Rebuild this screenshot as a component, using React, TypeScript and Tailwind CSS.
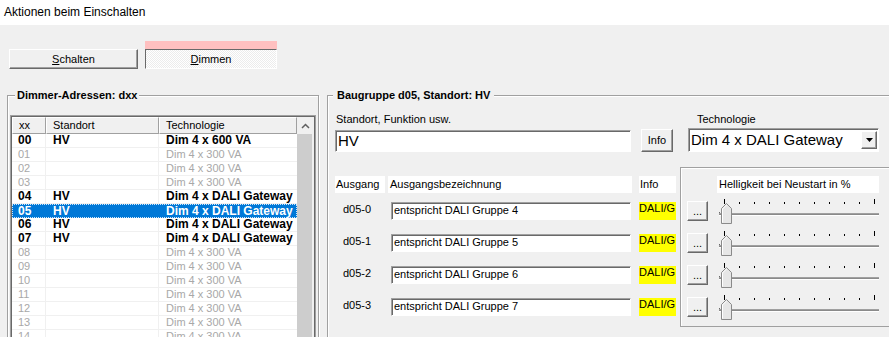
const FONT = "font-['Liberation_Sans',Arial,sans-serif]";

type Row = { xx: string; st: string; tech: string; on: boolean };

const rows: Row[] = [
  { xx: '00', st: 'HV', tech: 'Dim 4 x 600 VA', on: true },
  { xx: '01', st: '', tech: 'Dim 4 x 300 VA', on: false },
  { xx: '02', st: '', tech: 'Dim 4 x 300 VA', on: false },
  { xx: '03', st: '', tech: 'Dim 4 x 300 VA', on: false },
  { xx: '04', st: 'HV', tech: 'Dim 4 x DALI Gateway', on: true },
  { xx: '05', st: 'HV', tech: 'Dim 4 x DALI Gateway', on: true },
  { xx: '06', st: 'HV', tech: 'Dim 4 x DALI Gateway', on: true },
  { xx: '07', st: 'HV', tech: 'Dim 4 x DALI Gateway', on: true },
  { xx: '08', st: '', tech: 'Dim 4 x 300 VA', on: false },
  { xx: '09', st: '', tech: 'Dim 4 x 300 VA', on: false },
  { xx: '10', st: '', tech: 'Dim 4 x 300 VA', on: false },
  { xx: '11', st: '', tech: 'Dim 4 x 300 VA', on: false },
  { xx: '12', st: '', tech: 'Dim 4 x 300 VA', on: false },
  { xx: '13', st: '', tech: 'Dim 4 x 300 VA', on: false },
  { xx: '14', st: '', tech: 'Dim 4 x 300 VA', on: false },
];

const outputs = ['0', '1', '2', '3'];

const raised =
  'border border-t-white border-l-white border-r-[#696969] border-b-[#696969] shadow-[inset_-1px_-1px_0_#a0a0a0] bg-[#f0f0f0]';
const sunken =
  'border border-t-[#a0a0a0] border-l-[#a0a0a0] border-r-white border-b-white shadow-[inset_1px_1px_0_#696969] bg-white';

const ListRow = ({ r, sel }: { r: Row; sel: boolean }) => {
  const text = r.on ? 'text-[12px] font-bold text-black' : 'text-[11px] text-[#a8a8a8]';
  if (sel) {
    return (
      <div className="flex h-[14px] bg-[#0078d7] text-white outline outline-1 outline-dotted outline-[#cfe6fb] -outline-offset-1">
        <div className="w-[34px] pl-[6px] text-[12px] font-bold leading-[14px]">{r.xx}</div>
        <div className="w-[113px] pl-[7px] text-[12px] font-bold leading-[14px]">{r.st}</div>
        <div className="w-[138px] pl-[7px] text-[12px] font-bold leading-[14px] whitespace-nowrap overflow-hidden">{r.tech}</div>
      </div>
    );
  }
  return (
    <div className={`flex h-[14px] ${text}`}>
      <div className="w-[34px] pl-[6px] leading-[13px] border-r border-b border-[#f0f0f0]">{r.xx}</div>
      <div className="w-[113px] pl-[7px] leading-[13px] border-r border-b border-[#f0f0f0]">{r.st}</div>
      <div className="w-[138px] pl-[7px] leading-[13px] border-b border-[#f0f0f0] whitespace-nowrap overflow-hidden">{r.tech}</div>
    </div>
  );
};

const Slider = () => {
  const ticks = Array.from({ length: 11 }, (_, i) => 6 + i * 15);
  return (
    <svg width="163" height="28" className="block -mt-[4px] ml-[10px]">
      {ticks.map((x, i) => {
        const tall = i === 0 || i === 10;
        return <rect key={i} x={x} y={tall ? 2 : 5} width="1" height={tall ? 5 : 2} fill="#000" />;
      })}
      <rect x="1" y="16" width="160" height="1" fill="#a0a0a0" />
      <rect x="1" y="17" width="160" height="1" fill="#8a8a8a" />
      <rect x="1" y="18" width="160" height="1" fill="#fff" />
      <rect x="1" y="15" width="1" height="1" fill="#696969" />
      <polygon points="3.5,11.5 8.5,6.5 13.5,11.5 13.5,26.5 3.5,26.5" fill="#e6e6e6" stroke="#8a8a8a" />
      <polyline points="4.5,25.5 4.5,12 8.5,8" fill="none" stroke="#fff" />
    </svg>
  );
};

export default function App() {
  return (
    <div className={`w-[889px] h-[337px] overflow-hidden bg-[#f0f0f0] text-black ${FONT}`}>
      <div className="h-[25px] bg-white pl-[4px] text-[12px] leading-[25px]">Aktionen beim Einschalten</div>

      {/* tabs */}
      <div className="flex items-end pt-[16px] pl-[9px]">
        <button className={`w-[129px] h-[20px] text-[11px] ${raised}`}>
          <span className="underline">S</span>chalten
        </button>
        <div className="ml-[7px] flex flex-col">
          <div className="h-[8px] w-[132px] bg-[#ffc0c0]" />
          <button className="w-[132px] h-[20px] text-[11px] border border-t-[#696969] border-l-[#696969] border-r-white border-b-white bg-[repeating-conic-gradient(#ffffff_0_25%,#ececec_0_50%)] bg-[length:2px_2px]">
            <span className="underline">D</span>immen
          </button>
        </div>
      </div>

      <div className="flex mt-[20px] pl-[7px] gap-[8px]">
        {/* left group */}
        <fieldset className="w-[312px] h-[260px] shrink-0 border border-[#a0a0a0] shadow-[inset_1px_1px_0_#fff,1px_1px_0_#fff]">
          <legend className="ml-[7px] px-[2px] bg-[#f0f0f0] text-[11px] font-bold leading-[13px]">Dimmer-Adressen: dxx</legend>
          <div className="px-[2px] pt-[13px]">
            <div className="w-[306px] h-[240px] border border-[#a0a0a0]">
              <div className="flex h-full border border-[#696969] bg-white">
                <div className="w-[285px]">
                  <div className="flex h-[17px] text-[11px] leading-[15px] bg-[#f0f0f0]">
                    <div className="w-[34px] pl-[6px] border border-t-white border-l-white border-r-[#a0a0a0] border-b-[#a0a0a0]">xx</div>
                    <div className="w-[113px] pl-[6px] border border-t-white border-l-white border-r-[#a0a0a0] border-b-[#a0a0a0]">Standort</div>
                    <div className="w-[138px] pl-[6px] border border-t-white border-l-white border-r-[#a0a0a0] border-b-[#a0a0a0]">Technologie</div>
                  </div>
                  {rows.map((r) => (
                    <ListRow key={r.xx} r={r} sel={r.xx === '05'} />
                  ))}
                </div>
                <div className="w-[17px] flex flex-col bg-[#f0f0f0]">
                  <div className="h-[17px] flex items-center justify-center">
                    <svg width="9" height="6">
                      <polyline points="1,5 4.5,1.5 8,5" fill="none" stroke="#606060" strokeWidth="1.5" />
                    </svg>
                  </div>
                  <div className="flex-1 mr-[2px] bg-[#cdcdcd]" />
                </div>
              </div>
            </div>
          </div>
        </fieldset>

        {/* right group */}
        <fieldset className="w-[575px] h-[260px] shrink-0 border border-[#a0a0a0] shadow-[inset_1px_1px_0_#fff,1px_1px_0_#fff]">
          <legend className="ml-[5px] px-[4px] bg-[#f0f0f0] text-[11px] font-bold leading-[13px]">Baugruppe d05, Standort: HV</legend>
          <div className="pl-[7px] pt-[11px]">
            <div className="flex items-end">
              <div className="w-[296px] flex flex-col">
                <div className="pl-[1px] text-[11px] leading-[13px]">Standort, Funktion usw.</div>
                <div className={`mt-[4px] h-[22px] pl-[2px] text-[15px] leading-[19px] ${sunken}`}>HV</div>
              </div>
              <button className={`ml-[10px] w-[32px] h-[23px] text-[11px] ${raised}`}>Info</button>
              <div className="ml-[15px] w-[191px] flex flex-col">
                <div className="pl-[9px] text-[11px] leading-[13px]">Technologie</div>
                <div className={`mt-[2px] h-[24px] flex items-center justify-between pl-[2px] pr-[1px] ${sunken}`}>
                  <span className="text-[15px] leading-[18px]">Dim 4 x DALI Gateway</span>
                  <div className={`w-[16px] h-[18px] flex items-center justify-center ${raised}`}>
                    <svg width="7" height="4">
                      <polygon points="0,0 7,0 3.5,4" fill="#000" />
                    </svg>
                  </div>
                </div>
              </div>
            </div>

            <div className="flex mt-[15px]">
              <div className="w-[341px] flex flex-col pt-[9px]">
                <div className="flex h-[17px] text-[11px] leading-[16px]">
                  <div className="w-[50px] bg-white pl-[1px]">Ausgang</div>
                  <div className="ml-[3px] w-[244px] bg-white pl-[2px]">Ausgangsbezeichnung</div>
                  <div className="ml-[7px] w-[37px] bg-white pl-[1px]">Info</div>
                </div>
                <div className="mt-[9px] flex flex-col">
                  {outputs.map((o) => (
                    <div key={o} className="flex h-[32px] items-start text-[11px]">
                      <div className="w-[56px] pl-[8px] leading-[13px] pt-[1px]">d05-{o}</div>
                      <div className={`w-[240px] h-[18px] pl-[2px] leading-[15px] ${sunken}`}>entspricht DALI Gruppe {Number(o) + 4}</div>
                      <div className="ml-[8px] w-[37px] h-[18px] bg-[#ffff00] leading-[12px] whitespace-nowrap overflow-hidden">DALI/G</div>
                    </div>
                  ))}
                </div>
              </div>

              <div className="ml-[4px] w-[215px] h-[160px] border border-[#a0a0a0] shadow-[inset_1px_1px_0_#fff]">
                <div className="ml-[36px] mt-[8px] w-[162px] h-[17px] bg-white pl-[2px] text-[11px] leading-[16px]">Helligkeit bei Neustart in %</div>
                <div className="mt-[8px] pl-[6px] flex flex-col">
                  {outputs.map((o) => (
                    <div key={o} className="flex h-[32px] items-start">
                      <button className={`w-[21px] h-[20px] text-[11px] leading-[14px] ${raised}`}>...</button>
                      <Slider />
                    </div>
                  ))}
                </div>
              </div>
            </div>
          </div>
        </fieldset>
      </div>
    </div>
  );
}
